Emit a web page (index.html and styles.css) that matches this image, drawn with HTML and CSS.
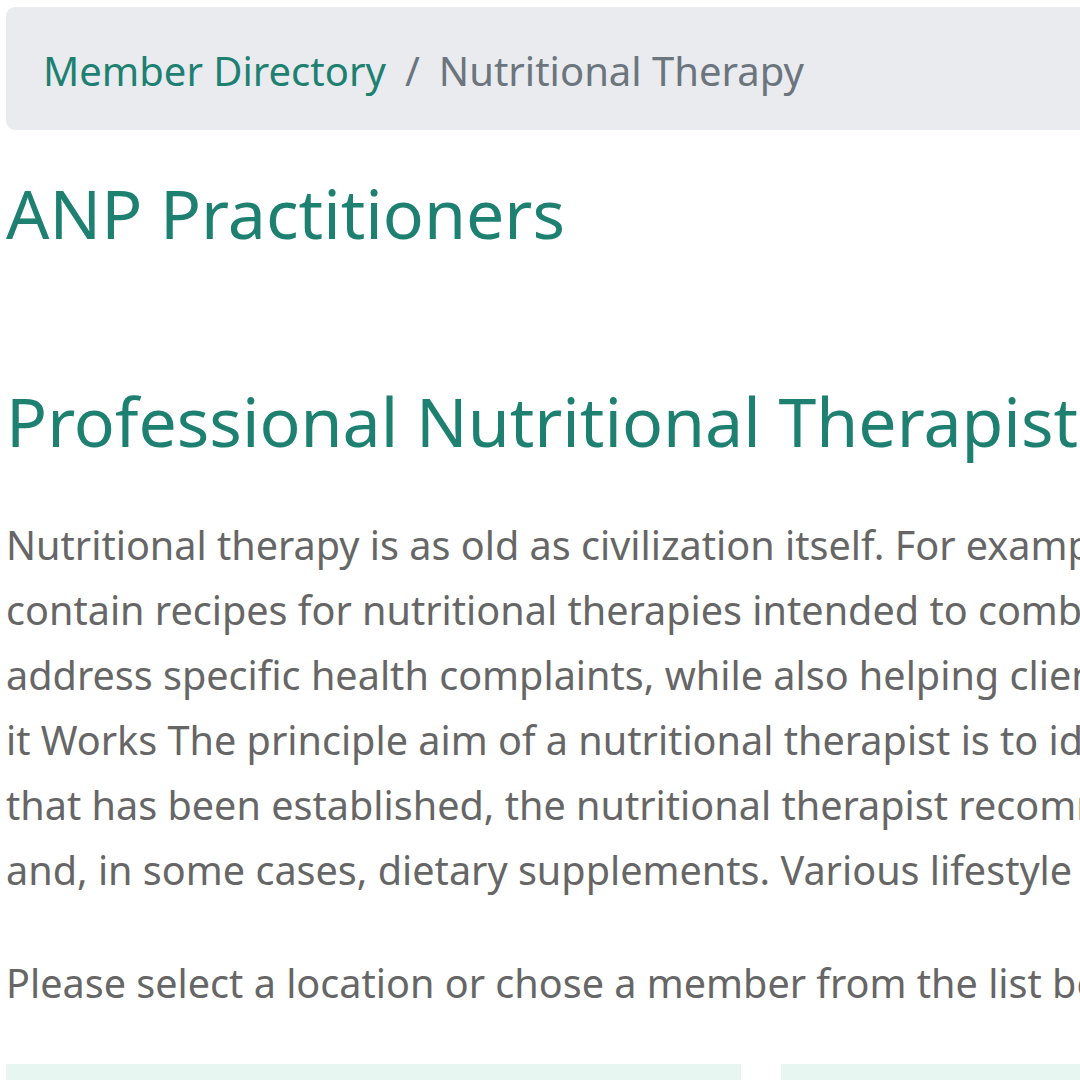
FILE: index.html
```html
<!DOCTYPE html>
<html lang="en">
<head>
<meta charset="utf-8">
<title>ANP Practitioners - Nutritional Therapy</title>
<link rel="stylesheet" href="styles.css">
</head>
<body>
<div class="page">
  <nav class="breadcrumb">
    <a class="crumb-link" href="#">Member Directory</a>
    <span class="crumb-sep">/</span>
    <span class="crumb-active">Nutritional Therapy</span>
  </nav>
  <h1 class="title">ANP Practitioners</h1>
  <h2 class="subtitle">Professional Nutritional Therapists</h2>
  <p class="body-text">
    <span class="line">Nutritional therapy is as old as civilization itself. For example, ancient Egyptian texts</span><br>
    <span class="line">contain recipes for nutritional therapies intended to combat disease. Nutritional therapists</span><br>
    <span class="line">address specific health complaints, while also helping clients achieve optimum health. How</span><br>
    <span class="line">it Works The principle aim of a nutritional therapist is to identify the root cause. Once</span><br>
    <span class="line">that has been established, the nutritional therapist recommends dietary changes</span><br>
    <span class="line">and, in some cases, dietary supplements. Various lifestyle changes may also be advised.</span>
  </p>
  <p class="body-text body-text--spaced">Please select a location or chose a member from the list below.</p>
  <div class="panels">
    <div class="panel"></div>
    <div class="panel"></div>
  </div>
</div>
</body>
</html>
```
FILE: styles.css
```css
html, body {
  margin: 0;
  padding: 0;
  background: #ffffff;
  overflow: hidden;
}
body {
  font-family: "Noto Sans", "Open Sans", sans-serif;
  width: 1080px;
  height: 1080px;
}
.page {
  width: 1600px;
  padding: 7px 0 0 6px;
}
.breadcrumb {
  display: flex;
  align-items: center;
  height: 123px;
  box-sizing: border-box;
  padding: 4px 0 0 37px;
  background: #e9ebef;
  border-radius: 9px;
  font-size: 40px;
}
.crumb-link {
  color: #1e8070;
  text-decoration: none;
}
.crumb-sep {
  color: #6c757d;
  padding: 0 19px;
}
.crumb-active {
  color: #6c757d;
}
.title {
  margin: 42px 0 0 0;
  font-size: 68px;
  font-weight: 400;
  line-height: 1.2;
  color: #1e8070;
}
.subtitle {
  margin: 126px 0 0 0;
  font-size: 68px;
  font-weight: 400;
  line-height: 1.2;
  color: #1e8070;
}
.body-text {
  margin: 52px 0 0 0;
  font-size: 39.6px;
  line-height: 65px;
  color: #666666;
}
.body-text--spaced {
  margin-top: 48px;
}
.line {
  white-space: nowrap;
}
.panels {
  display: grid;
  grid-template-columns: 735px 735px;
  gap: 40px;
  margin-top: 48px;
}
.panel {
  height: 200px;
  background: #e8f6f2;
}
```
